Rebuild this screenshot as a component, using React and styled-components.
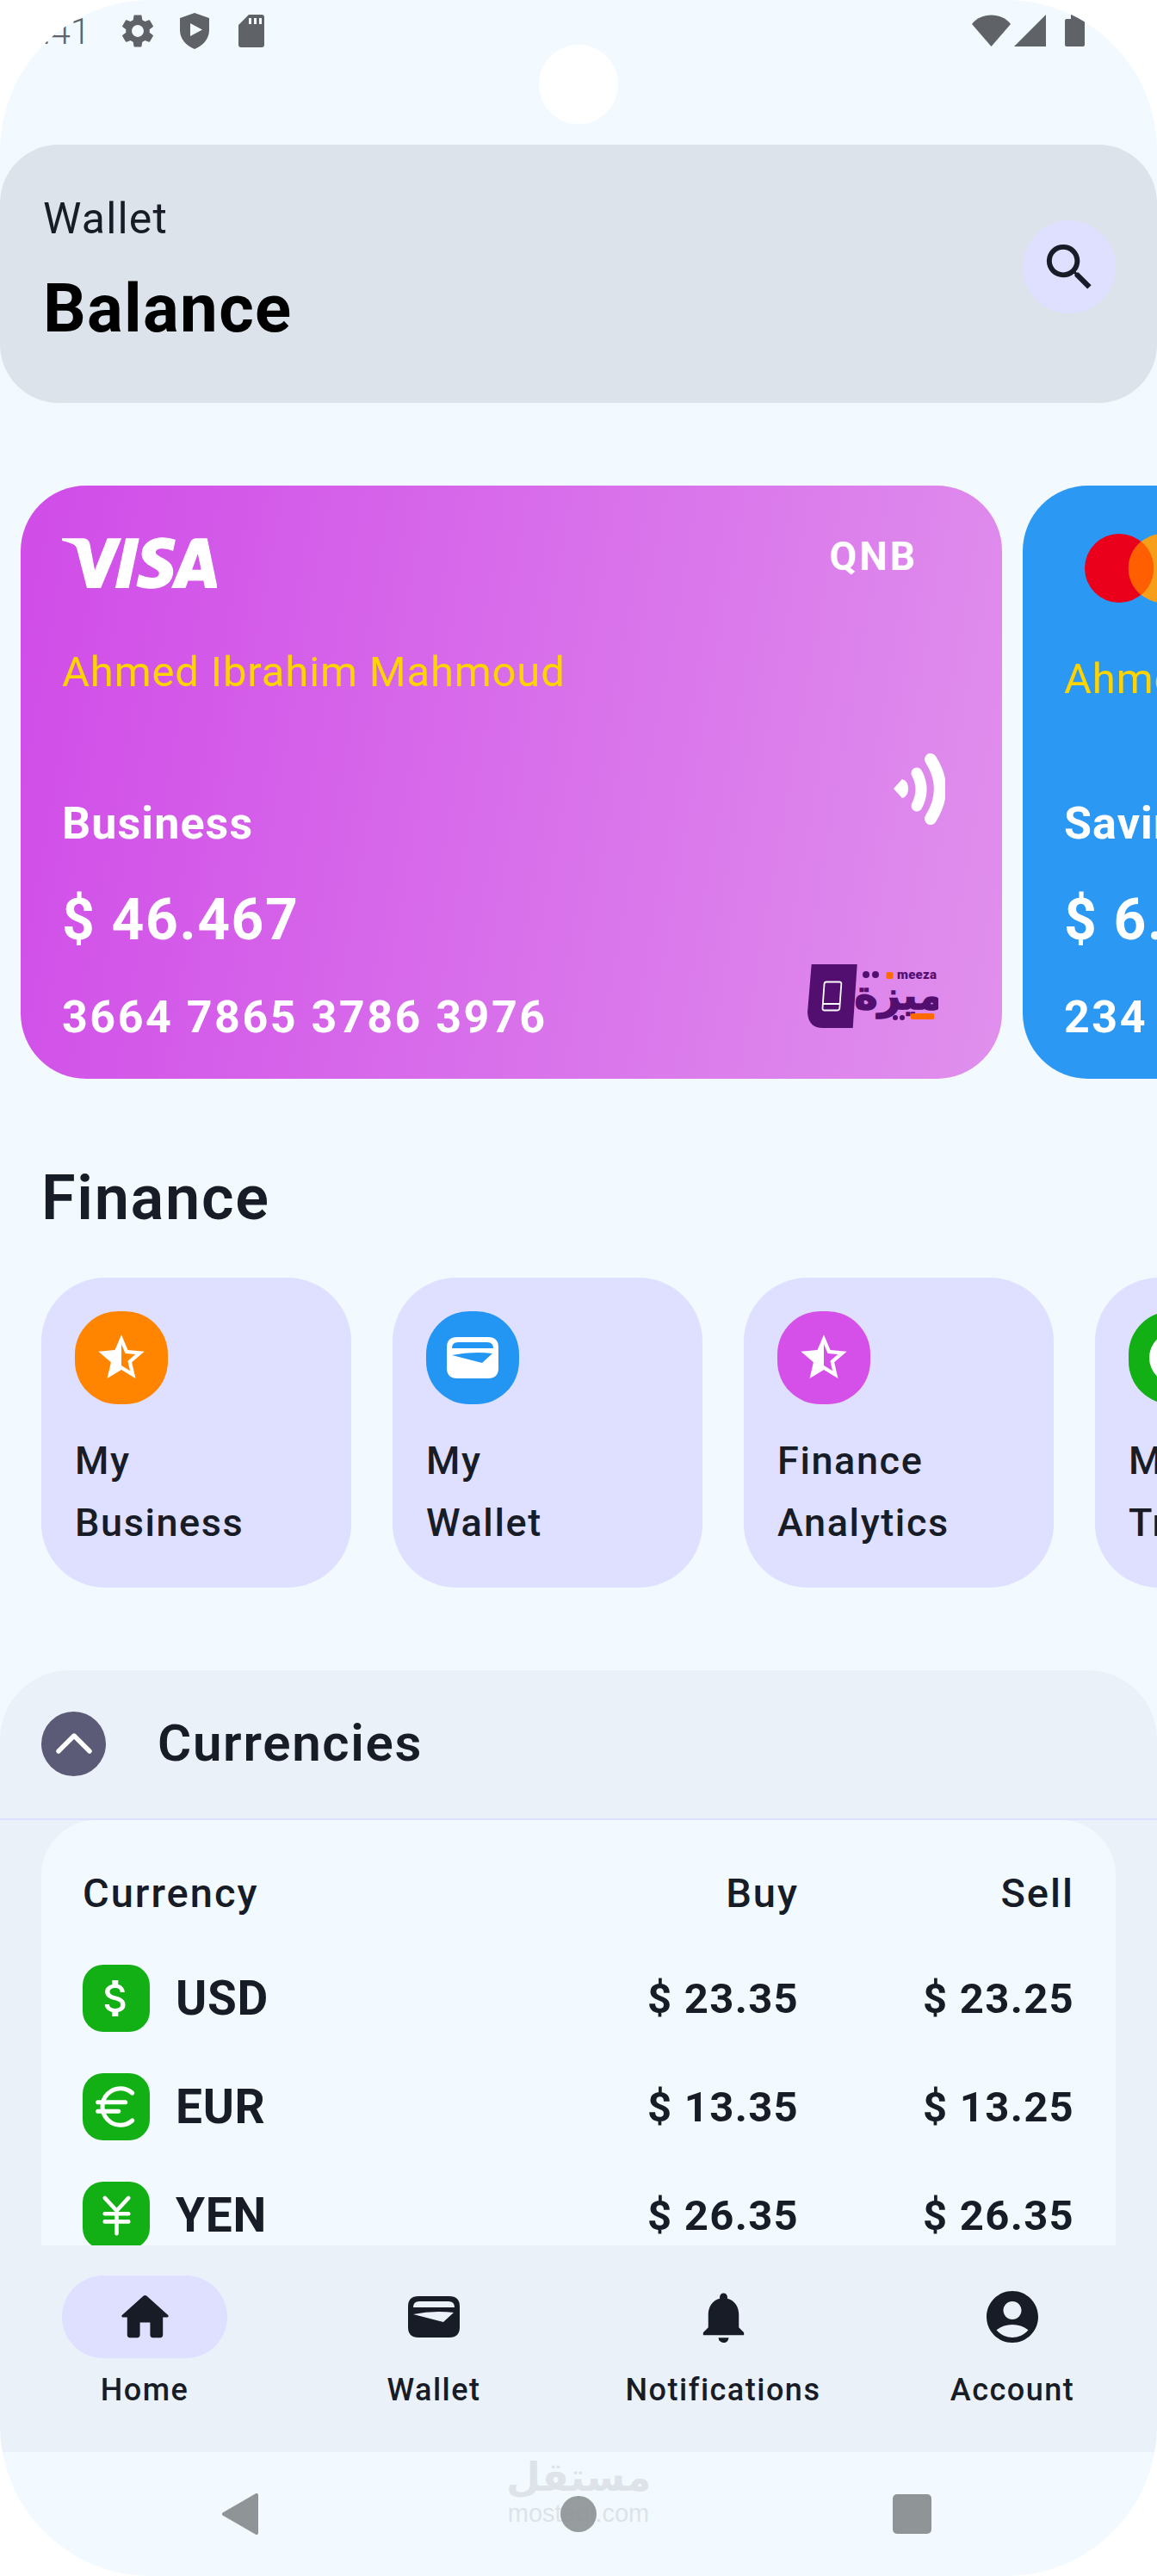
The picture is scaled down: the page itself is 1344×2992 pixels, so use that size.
import styled, { createGlobalStyle } from "styled-components";
import {
  MdSettings,
  MdSearch,
  MdStarHalf,
  MdNotifications,
  MdAccountCircle,
  MdAttachMoney,
} from "react-icons/md";
import { SiVisa } from "react-icons/si";
import { ChevronUp, Euro, JapaneseYen } from "lucide-react";

const ink = "#171c26";

const GlobalStyle = createGlobalStyle`
  * { box-sizing: border-box; }
  html, body { margin: 0; padding: 0; background: #fff; }
  body { font-family: Roboto, "Noto Sans", sans-serif; color: ${ink}; }
`;

const Screen = styled.div`
  position: relative;
  width: 1344px;
  height: 2992px;
  background: #f3faff;
  border-radius: 175px;
  overflow: hidden;
  display: flex;
  flex-direction: column;
`;

const StatusBar = styled.div`
  height: 168px;
  flex-shrink: 0;
  padding-top: 14px;
  display: flex;
  align-items: flex-start;
  color: #5f6368;
`;

const Time = styled.div`
  width: 105px;
  text-align: right;
  font-size: 42px;
  line-height: 44px;
  margin-top: 1px;
  font-weight: 300;
`;

const StatusSlot = styled.div`
  display: flex;
  margin-left: ${(p) => p.$left}px;
  margin-top: ${(p) => p.$top || 0}px;
`;

const PunchHole = styled.div`
  position: absolute;
  top: 52px;
  left: 626px;
  width: 92px;
  height: 92px;
  border-radius: 50%;
  background: #fff;
`;

const Header = styled.header`
  height: 300px;
  flex-shrink: 0;
  background: #dce3ea;
  border-radius: 68px;
  padding: 56px 50px 0 50px;
  display: flex;
  justify-content: space-between;
`;

const HeaderText = styled.div`
  display: flex;
  flex-direction: column;
`;

const WalletLabel = styled.div`
  font-size: 50px;
  line-height: 60px;
  letter-spacing: 1.2px;
  color: ${ink};
`;

const BalanceTitle = styled.div`
  font-size: 78px;
  line-height: 92px;
  font-weight: 700;
  letter-spacing: 1.3px;
  margin-top: 29px;
  color: #000;
`;

const SearchButton = styled.div`
  width: 108px;
  height: 108px;
  border-radius: 50%;
  background: #dfdfff;
  margin-top: 32px;
  margin-right: -2px;
  display: flex;
  align-items: center;
  justify-content: center;
  color: ${ink};
`;

const Carousel = styled.div`
  margin-top: 96px;
  padding-left: 24px;
  display: flex;
  gap: 24px;
  flex-shrink: 0;
`;

const Card = styled.div`
  width: 1140px;
  height: 689px;
  flex-shrink: 0;
  border-radius: 76px;
  background: ${(p) => p.$bg};
  padding: 56px 48px 41px 48px;
  display: flex;
  flex-direction: column;
  color: #fff;
`;

const CardTop = styled.div`
  height: 80px;
  display: flex;
  justify-content: space-between;
  align-items: flex-start;
`;

const VisaMark = styled(SiVisa)`
  width: 180px;
  height: 62px;
  margin-top: 3px;
  stroke: #fff;
  stroke-width: 0.15px;
`;

const BankName = styled.div`
  font-size: 46px;
  line-height: 52px;
  font-weight: 700;
  letter-spacing: 3px;
  margin-right: 50px;
`;

const CardHolder = styled.div`
  font-size: 49px;
  line-height: 60px;
  letter-spacing: 0.85px;
  color: #ffd400;
  margin-top: ${(p) => p.$top}px;
  white-space: nowrap;
`;

const CardBottom = styled.div`
  margin-top: auto;
  display: flex;
  justify-content: space-between;
  align-items: flex-end;
`;

const CardLines = styled.div`
  display: flex;
  flex-direction: column;
`;

const CardType = styled.div`
  font-size: 52px;
  line-height: 60px;
  font-weight: 700;
  letter-spacing: 1.1px;
  margin-bottom: 40px;
`;

const CardAmount = styled.div`
  font-size: 66px;
  line-height: 84px;
  font-weight: 700;
  letter-spacing: 1.6px;
  margin-bottom: 41px;
`;

const CardNumber = styled.div`
  font-size: 52px;
  line-height: 60px;
  font-weight: 700;
  letter-spacing: 2.5px;
  white-space: nowrap;
`;

const CardMarks = styled.div`
  display: flex;
  flex-direction: column;
  align-items: flex-end;
  gap: 162px;
  padding-bottom: 17px;
`;

const ContactlessSlot = styled.div`
  display: flex;
  margin-right: 18px;
`;

const MeezaSlot = styled.div`
  display: flex;
  margin-right: 26px;
`;

const SectionTitle = styled.h2`
  margin: 97px 0 50px 48px;
  font-size: 72px;
  line-height: 84px;
  font-weight: 600;
  letter-spacing: 1.7px;
  color: ${ink};
  flex-shrink: 0;
`;

const TileRow = styled.div`
  padding-left: 48px;
  display: flex;
  gap: 48px;
  flex-shrink: 0;
`;

const Tile = styled.div`
  width: 360px;
  height: 360px;
  flex-shrink: 0;
  border-radius: 74px;
  background: #dfdfff;
  padding: 39px;
`;

const TileIcon = styled.div`
  width: 108px;
  height: 108px;
  border-radius: 50px;
  background: ${(p) => p.$bg};
  color: #fff;
  display: flex;
  align-items: center;
  justify-content: center;
  margin-bottom: 30px;
`;

const TileDot = styled.div`
  width: 60px;
  height: 60px;
  border-radius: 50%;
  background: #fff;
`;

const TileText = styled.div`
  font-size: 45px;
  line-height: 72px;
  font-weight: 500;
  letter-spacing: 1.6px;
  color: ${ink};
  white-space: nowrap;
`;

const Currencies = styled.section`
  margin-top: 96px;
  background: #ebf1f9;
  border-radius: 80px 80px 0 0;
  flex-shrink: 0;
`;

const CurrenciesHeader = styled.div`
  height: 174px;
  padding: 0 48px 2px 48px;
  border-bottom: 2px solid #dfdfff;
  display: flex;
  align-items: center;
  gap: 60px;
`;

const Collapse = styled.div`
  width: 75px;
  height: 75px;
  border-radius: 50%;
  background: #5b5b78;
  color: #fff;
  display: flex;
  align-items: center;
  justify-content: center;
`;

const CurrenciesTitle = styled.div`
  font-size: 60px;
  line-height: 66px;
  font-weight: 600;
  letter-spacing: 1.7px;
`;

const RatesPanel = styled.div`
  margin: 0 48px;
  height: 494px;
  overflow: hidden;
  background: #f3faff;
  border-radius: 64px 64px 0 0;
  padding: 54px 48px 0 48px;
`;

const RatesGrid = styled.div`
  display: grid;
  grid-template-columns: 1fr 320px 320px;
  align-items: center;
`;

const RatesHead = styled(RatesGrid)`
  height: 60px;
  margin-bottom: 54px;
  font-size: 47px;
  font-weight: 500;
  letter-spacing: 2px;
`;

const RateRow = styled(RatesGrid)`
  height: 78px;
  margin-bottom: 48px;
  font-size: 49px;
  font-weight: 700;
  letter-spacing: 1.3px;
`;

const Right = styled.div`
  text-align: right;
`;

const CurrencyCell = styled.div`
  display: flex;
  align-items: center;
  gap: 30px;
`;

const CurrencyIcon = styled.div`
  width: 78px;
  height: 78px;
  border-radius: 24px;
  background: #12b014;
  color: #fff;
  display: flex;
  align-items: center;
  justify-content: center;
`;

const CurrencyCode = styled.div`
  font-size: 55px;
  letter-spacing: 0.7px;
`;

const BottomNav = styled.nav`
  height: 240px;
  flex-shrink: 0;
  background: #ebf1f9;
  display: grid;
  grid-template-columns: repeat(4, 1fr);
`;

const NavItem = styled.div`
  padding-top: 35px;
  display: flex;
  flex-direction: column;
  align-items: center;
`;

const NavPill = styled.div`
  width: 192px;
  height: 96px;
  border-radius: 48px;
  background: ${(p) => (p.$active ? "#dfdfff" : "transparent")};
  display: flex;
  align-items: center;
  justify-content: center;
  color: ${ink};
`;

const NavLabel = styled.div`
  margin-top: 12px;
  font-size: 36px;
  line-height: 50px;
  font-weight: 500;
  letter-spacing: 1.5px;
`;

const SystemNav = styled.div`
  position: relative;
  flex: 1;
  padding: 48px 262px 0 258px;
  display: flex;
  justify-content: space-between;
  align-items: flex-start;
`;

const BackSlot = styled.div`
  width: 49px;
  display: flex;
`;

const HomeDot = styled.div`
  position: relative;
  z-index: 1;
  width: 42px;
  height: 42px;
  margin-top: 3px;
  border-radius: 50%;
  background: rgba(143, 148, 151, 0.93);
`;

const RecentSquare = styled.div`
  width: 45px;
  height: 46px;
  margin-top: 1px;
  border-radius: 5px;
  background: #8f9497;
`;

const Watermark = styled.div`
  position: absolute;
  top: 4px;
  left: 572px;
  width: 200px;
  text-align: center;
  color: #dde3e8;
`;

const WatermarkArabic = styled.div`
  font-family: "DejaVu Sans", sans-serif;
  font-size: 46px;
  line-height: 50px;
  font-weight: 700;
`;

const WatermarkLatin = styled.div`
  font-family: "Liberation Sans", sans-serif;
  font-size: 29px;
  line-height: 30px;
  margin-top: 2px;
`;

const GearIcon = () => <MdSettings size={46} />;

const ShieldIcon = () => (
  <svg width="34" height="42" viewBox="0 0 34 42" fill="currentColor">
    <path
      fillRule="evenodd"
      d="M17 0 34 6V20C34 30 27 38 17 42 7 38 0 30 0 20V6ZM12 12V27L26 19.5Z"
    />
  </svg>
);

const SdIcon = () => (
  <svg width="30" height="38" viewBox="0 0 30 38" fill="currentColor">
    <path
      fillRule="evenodd"
      d="M12 0H27Q30 0 30 3V35Q30 38 27 38H3Q0 38 0 35V12ZM12 4V11H15V4ZM18 4V11H21V4ZM24 4V11H27V4Z"
    />
  </svg>
);

const WifiIcon = () => (
  <svg width="45" height="37" viewBox="0 0 45 37" fill="currentColor">
    <path d="M0 11C10 -3 35 -3 45 11L22.5 37Z" />
  </svg>
);

const SignalIcon = () => (
  <svg width="37" height="37" viewBox="0 0 37 37" fill="currentColor">
    <path d="M37 0V37H0Z" />
  </svg>
);

const BatteryIcon = () => (
  <svg width="23" height="37" viewBox="0 0 23 37" fill="currentColor">
    <path d="M7 0H17V5H21Q23 5 23 7V35Q23 37 21 37H2Q0 37 0 35V7Q0 5 2 5H7Z" />
  </svg>
);

const MastercardMark = () => (
  <svg width="132" height="80" viewBox="0 0 132 80">
    <circle cx="40" cy="40" r="40" fill="#eb001b" />
    <circle cx="91" cy="40" r="40" fill="#f79e1b" />
    <path d="M65.5 9a40 40 0 0 1 0 62 40 40 0 0 1 0-62Z" fill="#ff5f00" />
  </svg>
);

const ContactlessIcon = () => (
  <svg width="60" height="83" viewBox="0 0 60 83" fill="none" stroke="#fff" strokeLinecap="round">
    <path d="M0 41 10 30Q17 32 17 41T10 52Z" fill="#fff" stroke="none" />
    <path d="M27 23Q37 42 27 61" strokeWidth="13" />
    <path d="M43 7Q65 41 43 76" strokeWidth="14" />
  </svg>
);

const MeezaLogo = () => (
  <svg width="152" height="75" viewBox="0 0 152 75">
    <path d="M4.7 0H57.7L52.7 74H18Q1 74 0 56Z" fill="#520f70" />
    <path
      d="M22 20.5H37Q39.5 20.5 39.3 23L37.3 51Q37 53.5 34.8 53.5H20Q17.3 53.5 17.5 51L19.5 23Q19.7 20.5 22 20.5ZM18 46H38"
      fill="none"
      stroke="#fff"
      strokeWidth="1.8"
    />
    <circle cx="68" cy="12" r="4" fill="#520f70" />
    <circle cx="79" cy="12" r="4" fill="#520f70" />
    <rect x="91.5" y="9" width="8" height="8" rx="2" fill="#ff6a00" />
    <text x="104" y="17" fontFamily="Roboto, sans-serif" fontSize="15" fontWeight="900" fill="#520f70" textLength="46">
      meeza
    </text>
    <text
      x="106"
      y="52"
      textAnchor="middle"
      fontFamily="'DejaVu Sans', sans-serif"
      fontSize="46"
      fontWeight="700"
      fill="#520f70"
      stroke="#520f70"
      strokeWidth="1.6"
    >
      ميزة
    </text>
    <circle cx="102" cy="62" r="3" fill="#520f70" />
    <circle cx="110" cy="62" r="3" fill="#520f70" />
    <rect x="120" y="57" width="27" height="7" rx="1.5" fill="#ff6a00" />
  </svg>
);

const WalletGlyph = () => (
  <svg width="60" height="48" viewBox="0 0 60 48" fill="currentColor">
    <path
      fillRule="evenodd"
      d="M12 0H48Q60 0 60 12V36Q60 48 48 48H12Q0 48 0 36V12Q0 0 12 0ZM6 13H54Q54 6 47 6H13Q6 6 6 13ZM6 21 41 30 53 19Q30 16 6 21Z"
    />
  </svg>
);

const HomeGlyph = () => (
  <svg width="71" height="71" viewBox="0 0 24 24" fill="currentColor">
    <path d="M10 19v-5h4v5c0 .55.45 1 1 1h3c.55 0 1-.45 1-1v-7h1.7c.46 0 .68-.57.33-.87L12.67 3.6c-.38-.34-.96-.34-1.34 0l-8.36 7.53c-.34.3-.13.87.33.87H5v7c0 .55.45 1 1 1h3c.55 0 1-.45 1-1z" />
  </svg>
);

const BackGlyph = () => (
  <svg width="42" height="48" viewBox="0 0 42 48" fill="#8f9497" stroke="#8f9497" strokeWidth="4" strokeLinejoin="round">
    <path d="M2 24 40 2V46Z" />
  </svg>
);

const tiles = [
  { bg: "#ff8500", lines: ["My", "Business"], icon: <MdStarHalf size={64} /> },
  { bg: "#2396f3", lines: ["My", "Wallet"], icon: <WalletGlyph /> },
  { bg: "#d450e8", lines: ["Finance", "Analytics"], icon: <MdStarHalf size={64} /> },
  { bg: "#12b014", lines: ["My", "Transfers"], icon: <TileDot /> },
];

const rates = [
  { code: "USD", buy: "$ 23.35", sell: "$ 23.25", icon: <MdAttachMoney size={56} /> },
  { code: "EUR", buy: "$ 13.35", sell: "$ 13.25", icon: <Euro size={64} strokeWidth={1.9} /> },
  { code: "YEN", buy: "$ 26.35", sell: "$ 26.35", icon: <JapaneseYen size={55} strokeWidth={2} /> },
];

const navItems = [
  { label: "Home", icon: <HomeGlyph />, active: true },
  { label: "Wallet", icon: <WalletGlyph /> },
  { label: "Notifications", icon: <MdNotifications size={71} /> },
  { label: "Account", icon: <MdAccountCircle size={72} /> },
];

const App = () => {
  return (
    <>
      <GlobalStyle />
      <Screen>
        <StatusBar>
          <Time>9:41</Time>
          <StatusSlot $left={32} $top={-1}>
            <GearIcon />
          </StatusSlot>
          <StatusSlot $left={26} $top={1}>
            <ShieldIcon />
          </StatusSlot>
          <StatusSlot $left={34} $top={3}>
            <SdIcon />
          </StatusSlot>
          <StatusSlot $left={822} $top={3}>
            <WifiIcon />
          </StatusSlot>
          <StatusSlot $left={4} $top={3}>
            <SignalIcon />
          </StatusSlot>
          <StatusSlot $left={22} $top={3}>
            <BatteryIcon />
          </StatusSlot>
        </StatusBar>
        <PunchHole />

        <Header>
          <HeaderText>
            <WalletLabel>Wallet</WalletLabel>
            <BalanceTitle>Balance</BalanceTitle>
          </HeaderText>
          <SearchButton>
            <MdSearch size={71} />
          </SearchButton>
        </Header>

        <Carousel>
          <Card $bg="linear-gradient(100deg, #d04ce8 0%, #e090ed 100%)">
            <CardTop>
              <VisaMark viewBox="0 7.9 24 8.2" preserveAspectRatio="none" />
              <BankName>QNB</BankName>
            </CardTop>
            <CardHolder $top={51}>Ahmed Ibrahim Mahmoud</CardHolder>
            <CardBottom>
              <CardLines>
                <CardType>Business</CardType>
                <CardAmount>$ 46.467</CardAmount>
                <CardNumber>3664 7865 3786 3976</CardNumber>
              </CardLines>
              <CardMarks>
                <ContactlessSlot>
                  <ContactlessIcon />
                </ContactlessSlot>
                <MeezaSlot>
                  <MeezaLogo />
                </MeezaSlot>
              </CardMarks>
            </CardBottom>
          </Card>
          <Card $bg="#2b99f3">
            <CardTop>
              <StatusSlot $left={24} $top={0}>
                <MastercardMark />
              </StatusSlot>
            </CardTop>
            <CardHolder $top={59}>Ahmed Ibrahim Mahmoud</CardHolder>
            <CardBottom>
              <CardLines>
                <CardType>Savings</CardType>
                <CardAmount>$ 6.250</CardAmount>
                <CardNumber>234 7865 3786 3976</CardNumber>
              </CardLines>
            </CardBottom>
          </Card>
        </Carousel>

        <SectionTitle>Finance</SectionTitle>
        <TileRow>
          {tiles.map((tile) => (
            <Tile key={tile.lines.join(" ")}>
              <TileIcon $bg={tile.bg}>{tile.icon}</TileIcon>
              {tile.lines.map((line) => (
                <TileText key={line}>{line}</TileText>
              ))}
            </Tile>
          ))}
        </TileRow>

        <Currencies>
          <CurrenciesHeader>
            <Collapse>
              <ChevronUp size={72} strokeWidth={1.8} />
            </Collapse>
            <CurrenciesTitle>Currencies</CurrenciesTitle>
          </CurrenciesHeader>
          <RatesPanel>
            <RatesHead>
              <div>Currency</div>
              <Right>Buy</Right>
              <Right>Sell</Right>
            </RatesHead>
            {rates.map((rate) => (
              <RateRow key={rate.code}>
                <CurrencyCell>
                  <CurrencyIcon>{rate.icon}</CurrencyIcon>
                  <CurrencyCode>{rate.code}</CurrencyCode>
                </CurrencyCell>
                <Right>{rate.buy}</Right>
                <Right>{rate.sell}</Right>
              </RateRow>
            ))}
          </RatesPanel>
        </Currencies>

        <BottomNav>
          {navItems.map((item) => (
            <NavItem key={item.label}>
              <NavPill $active={item.active}>{item.icon}</NavPill>
              <NavLabel>{item.label}</NavLabel>
            </NavItem>
          ))}
        </BottomNav>

        <SystemNav>
          <Watermark>
            <WatermarkArabic>مستقل</WatermarkArabic>
            <WatermarkLatin>mostaql.com</WatermarkLatin>
          </Watermark>
          <BackSlot>
            <BackGlyph />
          </BackSlot>
          <HomeDot />
          <RecentSquare />
        </SystemNav>
      </Screen>
    </>
  );
};

export default App;
